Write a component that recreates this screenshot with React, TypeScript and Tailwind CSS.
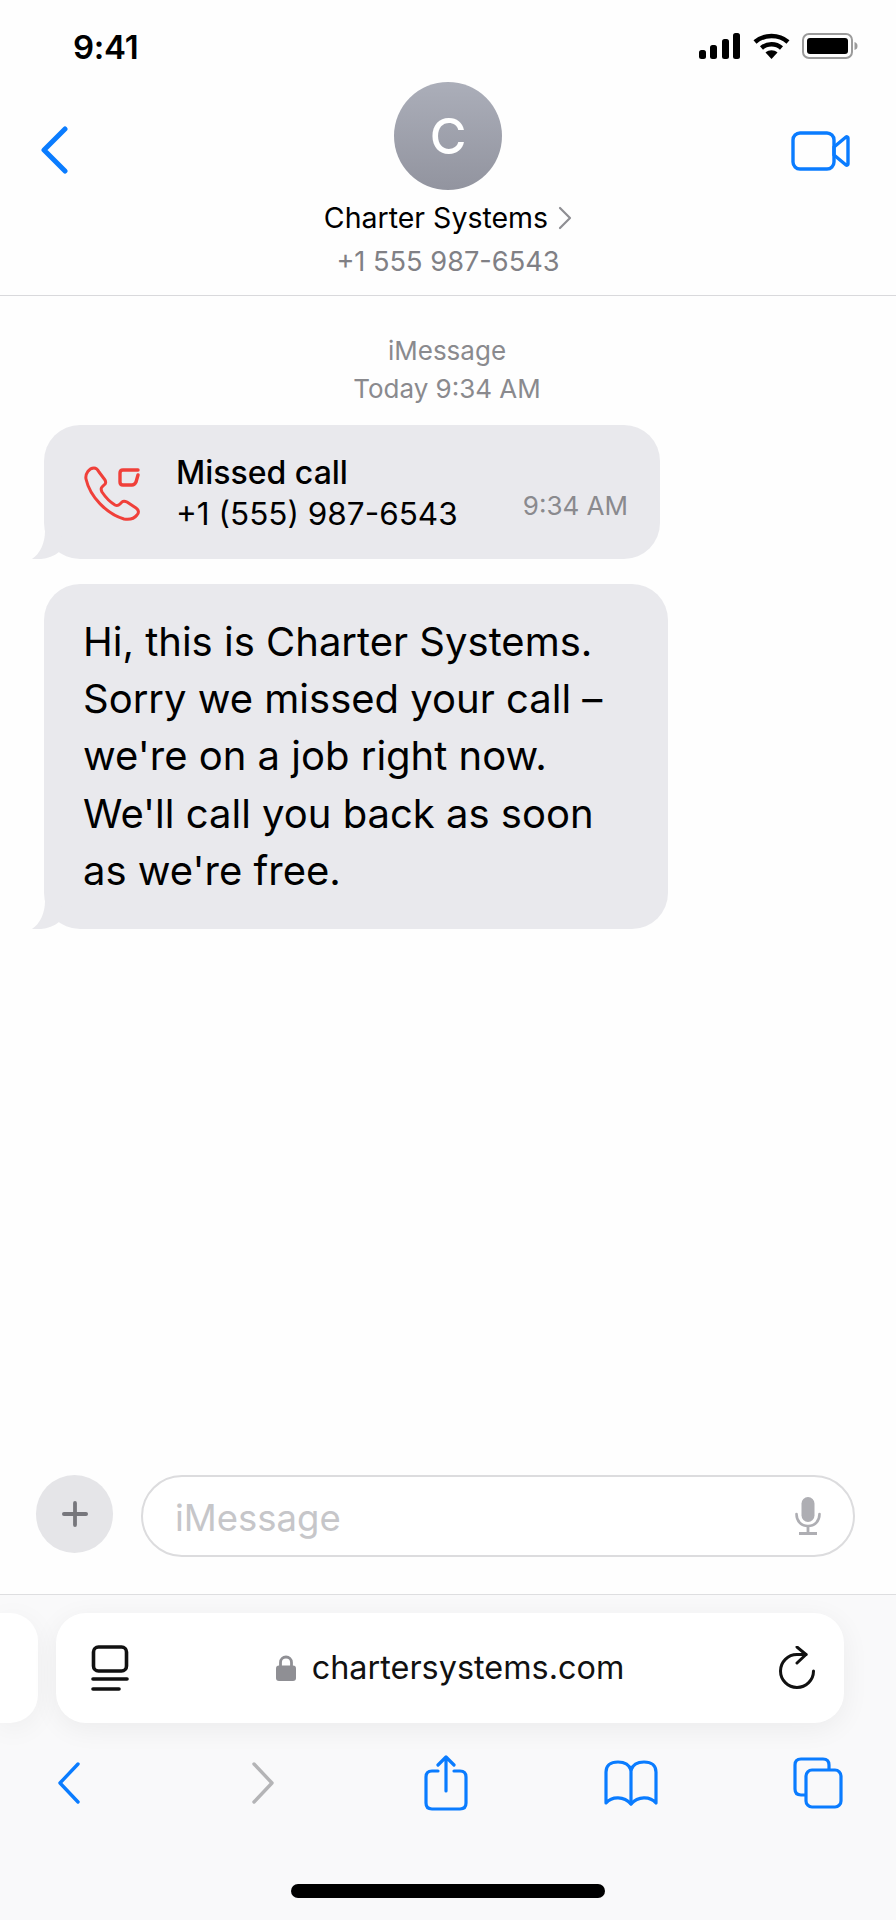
import React from 'react'
import { Plus } from 'lucide-react'

const BLUE = '#0a7cff'

function StatusBar() {
  return (
    <div className="flex h-[82px] items-start justify-between pl-[73px] pr-[38px] pt-[33px]">
      <span className="text-[33px] font-semibold leading-[28px] tracking-[-0.3px] text-black">9:41</span>
      <div className="flex items-center gap-[12px]">
        <svg width="42" height="26" viewBox="0 0 42 26" fill="#000">
          <rect x="0" y="17" width="7" height="9" rx="2.5" />
          <rect x="11" y="12" width="7" height="14" rx="2.5" />
          <rect x="23" y="6" width="7" height="20" rx="2.5" />
          <rect x="34" y="0" width="7" height="26" rx="2.5" />
        </svg>
        <svg width="37" height="26" viewBox="0 0 37 26" fill="none" stroke="#000" strokeWidth="4.5">
          <path d="M2 9 C11 1 26 1 35 9" />
          <path d="M8.5 15 C14 10 23 10 28.5 15" />
          <path d="M18.5 26 L12.5 19.5 C16 16.5 21 16.5 24.5 19.5 Z" fill="#000" stroke="none" />
        </svg>
        <svg width="56" height="26" viewBox="0 0 56 26" fill="none">
          <rect x="1" y="1" width="49" height="24" rx="6" stroke="#9b9b9b" strokeWidth="2" />
          <rect x="5" y="5" width="41" height="16" rx="3" fill="#000" />
          <path d="M52.5 9 C55 10 55.5 11 55.5 13 C55.5 15 55 16 52.5 17 Z" fill="#9b9b9b" />
        </svg>
      </div>
    </div>
  )
}

function Header() {
  return (
    <div className="grid h-[214px] grid-cols-[1fr_auto_1fr] items-start border-b border-[#d9d9dc] px-[46px]">
      <svg className="ml-[-6px] mt-[44px]" width="29" height="48" viewBox="0 0 29 48" fill="none" stroke={BLUE} strokeWidth="5" strokeLinecap="round" strokeLinejoin="round">
        <path d="M25 3 L4 24 L25 45" />
      </svg>
      <div className="flex flex-col items-center">
        <div className="flex h-[108px] w-[108px] items-center justify-center rounded-full bg-gradient-to-b from-[#abaeb9] to-[#92949f] text-[50px] font-medium leading-none text-white">
          C
        </div>
        <div className="mt-[10px] flex items-center gap-[10px]">
          <span className="text-[28.5px] leading-[36px] text-black">Charter Systems</span>
          <svg width="14" height="24" viewBox="0 0 14 24" fill="none" stroke="#8e8e93" strokeWidth="2.2" strokeLinecap="round" strokeLinejoin="round">
            <path d="M2 2 L12 12 L2 22" />
          </svg>
        </div>
        <span className="mt-[11px] text-[27.2px] leading-[30px] text-[#808085]">+1 555 987-6543</span>
      </div>
      <svg className="mt-[49px] justify-self-end" width="59" height="40" viewBox="0 0 59 40" fill="none" stroke={BLUE} strokeWidth="3.4" strokeLinejoin="round">
        <rect x="2" y="2" width="41" height="36" rx="7" />
        <path d="M43 16 L55 6 C56 5.5 57 6 57 7 V33 C57 34 56 34.5 55 34 L43 24 Z" />
      </svg>
    </div>
  )
}

function Tail() {
  return (
    <svg className="absolute bottom-0 left-[-13px]" width="40" height="40" viewBox="0 0 40 40" fill="#e9e9ed">
      <path d="M14 12 C14 24 9 35 1 40 C10 41 21 39 28 33 L40 20 Z" />
    </svg>
  )
}

function MissedCallBubble() {
  return (
    <div className="relative flex h-[134px] w-[616px] items-center rounded-[36px] bg-[#e9e9ed] pl-[40px] pr-[32px]">
      <Tail />
      <svg className="relative mt-[2px]" width="56" height="56" viewBox="0 0 56 56" fill="none" stroke="#f0403a" strokeWidth="3" strokeLinejoin="round" strokeLinecap="round">
        <path d="M2 14 C1 9 5 3 10 3 C12 3 14 5 15 7 L21 15 C22 17 22 19 20 20 L18 22 C17 23 17 25 18 27 C22 33 26 37 31 40 C33 41 34 41 36 39 L38 37 C39 36 41 36 43 37 L52 43 C55 45 55 48 53 50 C50 54 46 55 40 54 C23 49 6 32 2 14 Z" />
        <path d="M54 5 H39 C37 5 36 6 36 8 V17 C36 19 37 20 39 20 H48 C50 20 51 19 52 17 L54 10" strokeWidth="3.4" />
      </svg>
      <div className="relative ml-[36px] mt-[2px] flex flex-col">
        <span className="text-[32px] font-medium leading-[41px] text-black">Missed call</span>
        <span className="text-[31.5px] leading-[41px] text-black">+1 (555) 987-6543</span>
      </div>
      <span className="relative ml-auto mt-[27px] text-[26px] leading-[30px] text-[#8a8a8e]">9:34 AM</span>
    </div>
  )
}

function TextBubble() {
  return (
    <div className="relative w-[624px] rounded-[36px] bg-[#e9e9ed] pb-[30px] pl-[39px] pr-[30px] pt-[29px] text-[40px] leading-[57.2px] text-black">
      <Tail />
      <p className="relative">
        Hi, this is Charter Systems.
        <br />
        Sorry we missed your call –
        <br />
        we're on a job right now.
        <br />
        We'll call you back as soon
        <br />
        as we're free.
      </p>
    </div>
  )
}

function Composer() {
  return (
    <div className="flex h-[120px] items-start gap-[28px] border-b border-[#dedee0] pl-[36px] pr-[41px]">
      <div className="flex h-[78px] w-[77px] items-center justify-center rounded-full bg-[#e5e5e8]">
        <Plus size={38} strokeWidth={2.4} color="#77777c" />
      </div>
      <div className="flex h-[82px] flex-1 items-center justify-between rounded-full border-2 border-[#dcdcde] bg-white pl-[32px] pr-[32px]">
        <span className="mt-[4px] text-[36.5px] leading-none text-[#c6c6c9]">iMessage</span>
        <svg width="26" height="38" viewBox="0 0 26 38" fill="none">
          <rect x="6.5" y="0" width="13" height="25" rx="6.5" fill="#aeaeb3" />
          <path d="M1.5 17 C1.5 24 6 29 13 29 C20 29 24.5 24 24.5 17" stroke="#aeaeb3" strokeWidth="2.6" strokeLinecap="round" />
          <path d="M13 29 V36 M4 36.5 H22" stroke="#aeaeb3" strokeWidth="2.8" />
        </svg>
      </div>
    </div>
  )
}

function UrlBar() {
  return (
    <div className="flex h-[110px] gap-[18px]">
      <div className="h-[110px] w-[38px] shrink-0 rounded-r-[28px] bg-white shadow-[0_6px_28px_rgba(0,0,0,0.05)]" />
      <div className="flex h-[110px] w-[788px] shrink-0 items-center rounded-[30px] bg-white pl-[34px] pr-[29px] shadow-[0_6px_28px_rgba(0,0,0,0.06)]">
        <svg width="40" height="46" viewBox="0 0 40 46" fill="none" stroke="#111" strokeWidth="3.6" strokeLinecap="round">
          <rect x="3.5" y="2" width="33" height="24" rx="5" />
          <path d="M3 34 H37" />
          <path d="M3 44 H29" />
        </svg>
        <div className="flex flex-1 items-center justify-center gap-[16px] pr-[9px]">
          <svg width="20" height="26" viewBox="0 0 20 26" fill="none">
            <path d="M4.5 12 V7.5 C4.5 4 7 2 10 2 C13 2 15.5 4 15.5 7.5 V12" stroke="#8f8f94" strokeWidth="2.8" />
            <rect x="0" y="10.5" width="20" height="15.5" rx="3" fill="#8f8f94" />
          </svg>
          <span className="text-[32.4px] leading-none text-[#111]">chartersystems.com</span>
        </div>
        <svg width="36" height="44" viewBox="0 0 36 44" fill="none" stroke="#111" strokeWidth="3" strokeLinecap="round" strokeLinejoin="round">
          <path d="M34.5 25 A16.5 16.5 0 1 1 18 8.5 H27" />
          <path d="M18 1 L27 8.5 L18 17" />
        </svg>
      </div>
    </div>
  )
}

function BottomToolbar() {
  return (
    <div className="mt-[32px] flex h-[56px] items-center pl-[58px]">
      <svg width="22" height="42" viewBox="0 0 22 42" fill="none" stroke={BLUE} strokeWidth="3.4" strokeLinecap="round" strokeLinejoin="round">
        <path d="M20 2 L2 21 L20 40" />
      </svg>
      <svg className="ml-[172px]" width="22" height="42" viewBox="0 0 22 42" fill="none" stroke="#b4b4b6" strokeWidth="3.4" strokeLinecap="round" strokeLinejoin="round">
        <path d="M2 2 L20 21 L2 40" />
      </svg>
      <svg className="ml-[150px]" width="44" height="56" viewBox="0 0 44 56" fill="none" stroke={BLUE} strokeWidth="3.2" strokeLinecap="round" strokeLinejoin="round">
        <path d="M14 16 H8 C4 16 2 18 2 22 V48 C2 52 4 54 8 54 H36 C40 54 42 52 42 48 V22 C42 18 40 16 36 16 H30" />
        <path d="M22 36 V2 M14 10 L22 2 L30 10" />
      </svg>
      <svg className="ml-[135px]" width="56" height="46" viewBox="0 0 56 46" fill="none" stroke={BLUE} strokeWidth="3.2" strokeLinecap="round" strokeLinejoin="round">
        <path d="M28 10 C26 4 21 2 15 2 C7 2 3 6 3 12 V43 C9 36 21 36 28 44 C35 36 47 36 53 43 V12 C53 6 49 2 41 2 C35 2 30 4 28 10 Z" />
        <path d="M28 10 V44" />
      </svg>
      <svg className="ml-[134px]" width="50" height="52" viewBox="0 0 50 52" fill="none" stroke={BLUE} strokeWidth="3.2" strokeLinejoin="round">
        <path d="M12 38 H8 C4 38 2 36 2 32 V8 C2 4 4 2 8 2 H30 C34 2 36 4 36 8 V12" />
        <rect x="13" y="13" width="35" height="37" rx="6" />
      </svg>
    </div>
  )
}

export default function App() {
  return (
    <div className="flex h-[1920px] w-[896px] flex-col overflow-hidden bg-[#fefefe] font-['Inter',sans-serif]">
      <StatusBar />
      <Header />
      <div className="flex flex-1 flex-col pl-[44px]">
        <div className="mt-[36px] flex flex-col items-center pr-[46px] text-[26px] leading-[38px] text-[#8a8a8e]">
          <span>iMessage</span>
          <span>Today 9:34 AM</span>
        </div>
        <div className="mt-[17px] flex flex-col gap-[25px]">
          <MissedCallBubble />
          <TextBubble />
        </div>
      </div>
      <Composer />
      <div className="flex h-[325px] flex-col bg-[#f9f9fa] pt-[18px]">
        <UrlBar />
        <BottomToolbar />
        <div className="mt-[73px] h-[14px] w-[314px] self-center rounded-full bg-black" />
      </div>
    </div>
  )
}
